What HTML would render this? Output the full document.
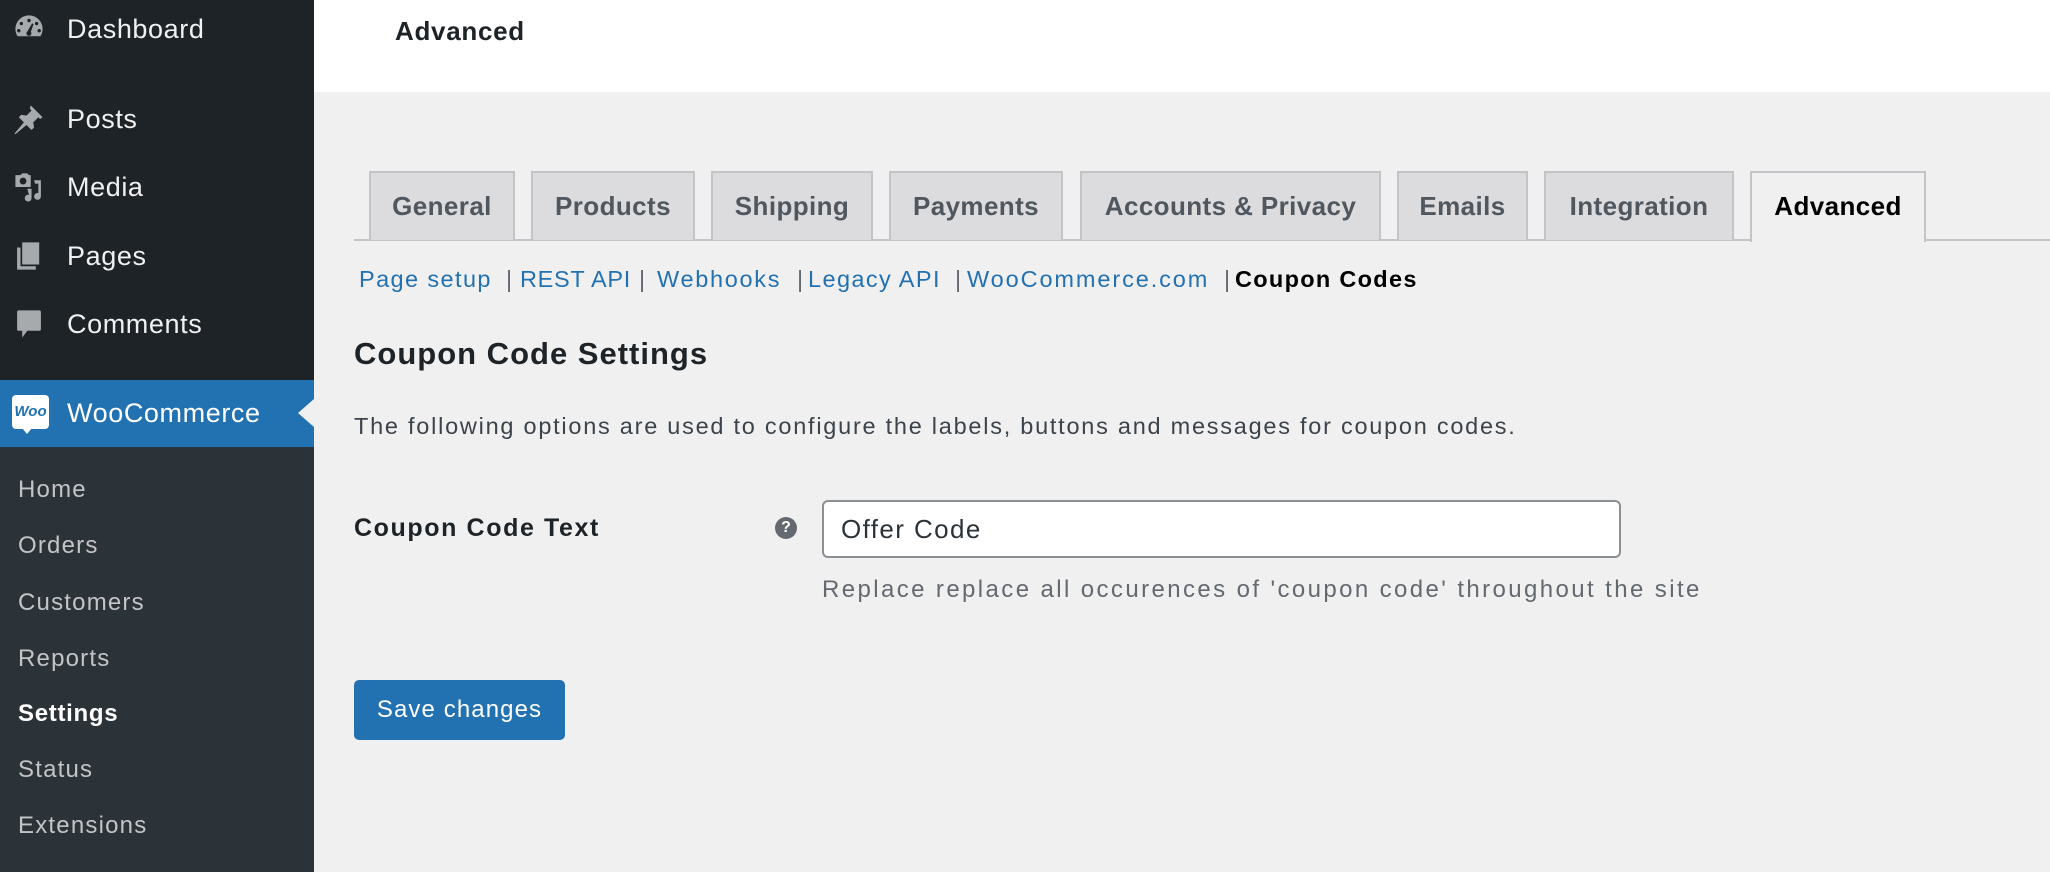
<!DOCTYPE html>
<html><head><meta charset="utf-8"><style>
*{margin:0;padding:0;box-sizing:border-box}
body{width:2050px;height:872px;overflow:hidden;background:#f0f0f1;font-family:"Liberation Sans",Arial,sans-serif;position:relative}
.sb{position:absolute;left:0;top:0;width:314px;height:872px;background:#1d2327}
.sub{position:absolute;left:0;top:447px;width:314px;height:425px;background:#2c3338}
.mi{position:absolute;left:67px;color:#f0f0f1;font-size:27px;line-height:32px;letter-spacing:0.6px}
.ic{position:absolute;left:12px;width:34px;height:34px}
.si{position:absolute;left:18px;color:#c3c4c7;font-size:24px;line-height:30px;letter-spacing:1.2px}
.woo{position:absolute;left:0;top:380px;width:314px;height:67px;background:#2271b1}
.hdr{position:absolute;left:314px;top:0;width:1736px;height:92px;background:#fff}
.tab{position:absolute;top:171px;height:69px;background:#dcdcde;border:2px solid #c3c4c7;border-bottom:none;color:#50575e;font-weight:bold;font-size:26px;line-height:67px;text-align:center;letter-spacing:0.4px}
.line{position:absolute;left:354px;top:239px;width:1696px;height:2px;background:#c3c4c7}
.sn{position:absolute;top:264px;font-size:23.5px;line-height:30px;color:#646970;white-space:nowrap;letter-spacing:1.4px}
.sn.a{color:#2271b1}
</style></head><body>
<div class="sb"></div>
<div class="sub"></div>
<svg class="ic" style="top:12px" viewBox="0 0 20 20"><path fill="#a7aaad" d="M10 2a8 8 0 0 0-8 8c0 1.6.5 3.1 1.3 4.3h13.4A8 8 0 0 0 18 10a8 8 0 0 0-8-8zm0 2a1 1 0 1 1 0 2 1 1 0 0 1 0-2zM5.5 5.8a1 1 0 1 1 0 2 1 1 0 0 1 0-2zm9 0a1 1 0 1 1 0 2 1 1 0 0 1 0-2zM4 10a1 1 0 1 1 0 2 1 1 0 0 1 0-2zm12 0a1 1 0 1 1 0 2 1 1 0 0 1 0-2zm-4.2-3.3l.9.4-1.6 4.5a1.5 1.5 0 1 1-2-.3z"/></svg>
<div class="mi" style="top:13px">Dashboard</div>
<svg class="ic" style="top:102px" viewBox="0 0 20 20"><path fill="#a7aaad" d="M11 2l7 7-1.5 1-1-1-3 3 .5 3-1.5 1.5-3-3L2 19l-.5-.5 5.5-6.5-3-3L5.5 7.5l3 .5 3-3-1-1z"/></svg>
<div class="mi" style="top:103px">Posts</div>
<svg class="ic" style="top:170px" viewBox="0 0 20 20"><path fill="#a7aaad" d="M2 3h3l1-1h3l1 1h1v7H2zm4.5 1.5a2 2 0 1 0 0 4 2 2 0 0 0 0-4zM13 6h4v9.5a2 2 0 1 1-1.5-1.9V8h-2zm-4 5h2.5v5.5a2 2 0 1 1-1.5-1.9z"/></svg>
<div class="mi" style="top:171px">Media</div>
<svg class="ic" style="top:239px" viewBox="0 0 20 20"><path fill="#a7aaad" d="M6 2h10v13H6zM3 5h2v11h9v2H3z"/></svg>
<div class="mi" style="top:240px">Pages</div>
<svg class="ic" style="top:307px" viewBox="0 0 20 20"><path fill="#a7aaad" d="M4 2h12a1 1 0 0 1 1 1v10a1 1 0 0 1-1 1H9l-3 4v-4H4a1 1 0 0 1-1-1V3a1 1 0 0 1 1-1z"/></svg>
<div class="mi" style="top:308px">Comments</div>
<div class="woo"></div>
<div style="position:absolute;left:12px;top:395px;width:37px;height:34px;background:#fff;border-radius:4px;color:#2271b1;font-size:15px;font-weight:bold;font-style:italic;line-height:34px;text-align:center">Woo</div>
<div style="position:absolute;left:22px;top:428px;width:0;height:0;border-left:5px solid transparent;border-right:5px solid transparent;border-top:6px solid #fff"></div>
<div class="mi" style="top:397px;color:#fff">WooCommerce</div>
<div style="position:absolute;left:298px;top:399px;width:0;height:0;border-top:14px solid transparent;border-bottom:14px solid transparent;border-right:16px solid #f0f0f1"></div>
<div class="si" style="top:475px">Home</div>
<div class="si" style="top:531px">Orders</div>
<div class="si" style="top:588px">Customers</div>
<div class="si" style="top:644px">Reports</div>
<div class="si" style="top:699px;color:#fff;font-weight:bold;letter-spacing:0.7px">Settings</div>
<div class="si" style="top:755px">Status</div>
<div class="si" style="top:811px">Extensions</div>

<div class="hdr"></div>
<div style="position:absolute;left:395px;top:16px;font-size:26px;font-weight:bold;color:#1d2327;line-height:30px;letter-spacing:0.7px">Advanced</div>

<div class="line"></div>
<div class="tab" style="left:369px;width:146px">General</div>
<div class="tab" style="left:531px;width:164px">Products</div>
<div class="tab" style="left:711px;width:162px">Shipping</div>
<div class="tab" style="left:889px;width:174px">Payments</div>
<div class="tab" style="left:1080px;width:301px">Accounts &amp; Privacy</div>
<div class="tab" style="left:1397px;width:131px">Emails</div>
<div class="tab" style="left:1544px;width:190px">Integration</div>
<div class="tab" style="left:1750px;width:176px;height:71px;background:#f0f0f1;color:#000">Advanced</div>

<div class="sn a" style="left:359px">Page setup</div>
<div class="sn" style="left:506px">|</div>
<div class="sn a" style="left:520px;letter-spacing:0.7px">REST API</div>
<div class="sn" style="left:639px">|</div>
<div class="sn a" style="left:657px;letter-spacing:1.7px">Webhooks</div>
<div class="sn" style="left:797px">|</div>
<div class="sn a" style="left:808px">Legacy API</div>
<div class="sn" style="left:955px">|</div>
<div class="sn a" style="left:967px;letter-spacing:1.9px">WooCommerce.com</div>
<div class="sn" style="left:1224px">|</div>
<div class="sn" style="left:1235px;color:#000;font-weight:bold;letter-spacing:1.3px">Coupon Codes</div>

<div style="position:absolute;left:354px;top:335px;font-size:31px;font-weight:bold;color:#1d2327;line-height:38px;letter-spacing:1px">Coupon Code Settings</div>
<div style="position:absolute;left:354px;top:411px;font-size:23.5px;color:#3c434a;line-height:30px;letter-spacing:1.75px">The following options are used to configure the labels, buttons and messages for coupon codes.</div>
<div style="position:absolute;left:354px;top:513px;font-size:25px;font-weight:bold;color:#1d2327;line-height:30px;letter-spacing:1.6px">Coupon Code Text</div>
<div style="position:absolute;left:775px;top:517px;width:22px;height:22px;border-radius:50%;background:#646970;color:#fff;font-size:16px;font-weight:bold;line-height:22px;text-align:center">?</div>
<div style="position:absolute;left:822px;top:500px;width:799px;height:58px;background:#fff;border:2px solid #8c8f94;border-radius:6px;padding-left:17px;font-size:26px;line-height:54px;color:#2c3338;letter-spacing:1.4px">Offer Code</div>
<div style="position:absolute;left:822px;top:575px;font-size:24px;color:#646970;line-height:30px;letter-spacing:2.4px">Replace replace all occurences of 'coupon code' throughout the site</div>
<div style="position:absolute;left:354px;top:680px;width:211px;height:60px;background:#2271b1;border-radius:5px;color:#fff;font-size:24px;line-height:60px;text-align:center;letter-spacing:1.1px">Save changes</div>
</body></html>
